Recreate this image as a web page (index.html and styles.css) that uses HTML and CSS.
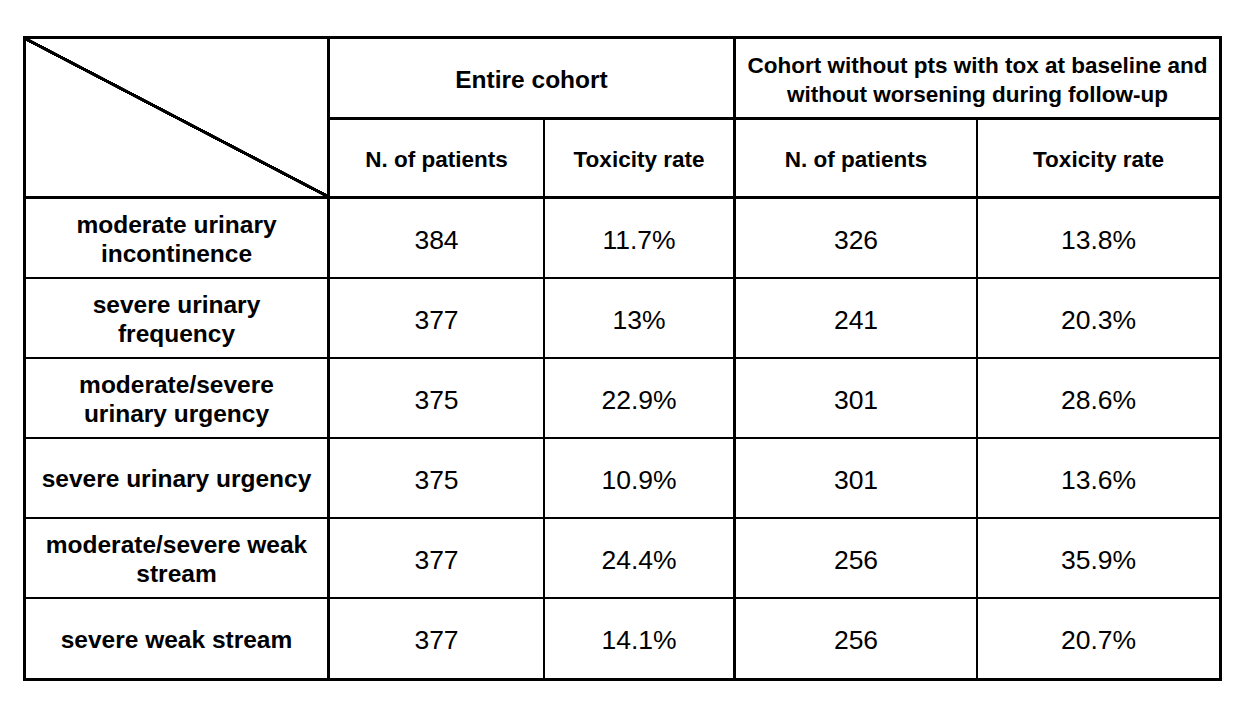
FILE: index.html
```html
<!DOCTYPE html>
<html lang="en">
<head>
<meta charset="utf-8">
<title>Toxicity table</title>
<link rel="stylesheet" href="styles.css">
</head>
<body>
<div class="tbl">
  <div class="cell corner"></div>
  <div class="cell hd big span2 bR3 bB3">Entire cohort</div>
  <div class="cell hd span2 bB3">Cohort without pts with tox at baseline and<br>without worsening during follow-up</div>

  <div class="cell hd bR2 bB3">N. of patients</div>
  <div class="cell hd bR3 bB3">Toxicity rate</div>
  <div class="cell hd bR2 bB3">N. of patients</div>
  <div class="cell hd bB3">Toxicity rate</div>

  <div class="cell lbl bR3 bB2">moderate urinary<br>incontinence</div>
  <div class="cell num bR2 bB2">384</div>
  <div class="cell num bR3 bB2">11.7%</div>
  <div class="cell num bR2 bB2">326</div>
  <div class="cell num bB2">13.8%</div>

  <div class="cell lbl bR3 bB2">severe urinary<br>frequency</div>
  <div class="cell num bR2 bB2">377</div>
  <div class="cell num bR3 bB2">13%</div>
  <div class="cell num bR2 bB2">241</div>
  <div class="cell num bB2">20.3%</div>

  <div class="cell lbl bR3 bB2">moderate/severe<br>urinary urgency</div>
  <div class="cell num bR2 bB2">375</div>
  <div class="cell num bR3 bB2">22.9%</div>
  <div class="cell num bR2 bB2">301</div>
  <div class="cell num bB2">28.6%</div>

  <div class="cell lbl bR3 bB2">severe urinary urgency</div>
  <div class="cell num bR2 bB2">375</div>
  <div class="cell num bR3 bB2">10.9%</div>
  <div class="cell num bR2 bB2">301</div>
  <div class="cell num bB2">13.6%</div>

  <div class="cell lbl bR3 bB2">moderate/severe weak<br>stream</div>
  <div class="cell num bR2 bB2">377</div>
  <div class="cell num bR3 bB2">24.4%</div>
  <div class="cell num bR2 bB2">256</div>
  <div class="cell num bB2">35.9%</div>

  <div class="cell lbl bR3">severe weak stream</div>
  <div class="cell num bR2">377</div>
  <div class="cell num bR3">14.1%</div>
  <div class="cell num bR2">256</div>
  <div class="cell num">20.7%</div>
</div>
</body>
</html>
```

FILE: styles.css
```css
* {
  box-sizing: border-box;
}

html, body {
  margin: 0;
  padding: 0;
  background: #fff;
}

body {
  font-family: "Liberation Sans", Arial, Helvetica, sans-serif;
  color: #000;
}

.tbl {
  margin: 36px 0 0 23px;
  width: 1199px;
  border: 3px solid #000;
  display: grid;
  grid-template-columns: 304px 215px 191px 242px 241px;
  grid-template-rows: 81px 79px 80px 80px 80px 80px 80px 79px;
}

.cell {
  display: flex;
  align-items: center;
  justify-content: center;
  text-align: center;
  border: 0 solid #000;
}

.span2 {
  grid-column: span 2;
}

.corner {
  grid-row: span 2;
  border-right-width: 3px;
  border-bottom-width: 3px;
  background: linear-gradient(to top right,
    transparent calc(50% - 1.8px),
    #000 calc(50% - 1.5px),
    #000 calc(50% + 1.5px),
    transparent calc(50% + 1.8px));
}

.hd {
  font-weight: bold;
  font-size: 22.5px;
  line-height: 29px;
  padding-top: 3px;
}

.hd.big {
  font-size: 24.5px;
}

.lbl {
  font-weight: bold;
  font-size: 24.5px;
  line-height: 29px;
  padding-top: 1px;
}

.num {
  font-size: 26.5px;
  line-height: 30px;
  padding-top: 3px;
}

.bR3 { border-right-width: 3px; }
.bR2 { border-right-width: 2px; }
.bB3 { border-bottom-width: 3px; }
.bB2 { border-bottom-width: 2px; }
```
